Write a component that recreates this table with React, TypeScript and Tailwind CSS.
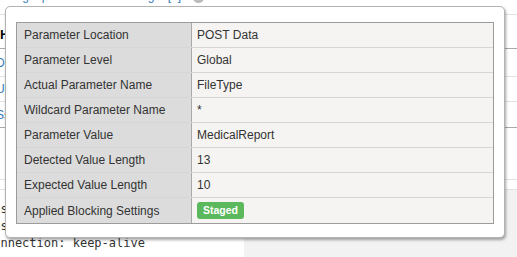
const details: [string, string][] = [
  ["Parameter Location", "POST Data"],
  ["Parameter Level", "Global"],
  ["Actual Parameter Name", "FileType"],
  ["Wildcard Parameter Name", "*"],
  ["Parameter Value", "MedicalReport"],
  ["Detected Value Length", "13"],
  ["Expected Value Length", "10"],
];

const requestLines = ["Host: 10.1.20.11", "Postman-Token: 3d1a", "Connection: keep-alive"];

function ViolationRow({ label, children, last }: { label: string; children: React.ReactNode; last?: boolean }) {
  return (
    <div className={`flex h-[25px] ${last ? "" : "border-b border-[#d6d6d6]"}`}>
      <div className="w-[175px] shrink-0 border-r border-[#a9a9a9] bg-[#dcdcdc] pl-[7px] flex items-center">
        {label}
      </div>
      <div className="flex-1 bg-[#f5f4f2] pl-[5px] flex items-center">{children}</div>
    </div>
  );
}

export default function App() {
  return (
    <div
      className="relative w-[517px] h-[257px] overflow-hidden bg-white text-[12px] text-[#333]"
      style={{ fontFamily: '"Liberation Sans", Arial, sans-serif' }}
    >
      {/* page behind the popup */}
      <div className="flex flex-col">
        <div className="h-[15px] flex items-start gap-[12px] pl-[7px] border-b border-[#e2e2e2]">
          <a className="text-[12px] leading-[14px] -mt-[11px] text-[#337ab7]">Illegal parameter value length [1]</a>
          <span className="w-[11px] h-[11px] rounded-full bg-[#bbb] -mt-[8px]" />
        </div>
        <div className="h-[34px] flex items-end pb-[4px] border-b border-[#aaa] font-bold text-[13px] text-black">
          <span>HTTP Request</span>
        </div>
        <div className="h-[28px] flex items-center border-b border-[#e2e2e2] text-[#337ab7] -ml-[4px]">
          <span>Do</span>
        </div>
        <div className="h-[25px] flex items-center border-b border-[#e2e2e2] text-[#337ab7] -ml-[4px]">
          <span>Uu</span>
        </div>
        <div className="h-[26px] flex items-center border-b border-[#aaa] text-[#337ab7] -ml-[4px]">
          <span>Ss</span>
        </div>
        <div className="h-[52px] border-b border-[#e2e2e2]" />
        <div className="h-[10px] border-b border-[#e2e2e2]" />
        <div className="flex h-[80px]">
          <pre
            className="w-[258px] bg-white pt-[11px] -ml-[14px] text-[12px] leading-[17px] text-[#333]"
            style={{ fontFamily: '"DejaVu Sans Mono", monospace' }}
          >
            {requestLines.join("\n")}
          </pre>
          <div className="flex-1 bg-[#f2f2f2]" />
        </div>
      </div>

      {/* violation details popup */}
      <div className="absolute left-[5px] top-[6px] w-[500px] h-[232px] bg-white border border-[#b3b3b3] rounded-[5px] shadow-[1px_2px_3px_rgba(0,0,0,0.35)] px-[10px] py-[15px]">
        <div className="border border-[#9c9c9c]">
          {details.map(([label, value]) => (
            <ViolationRow key={label} label={label}>
              {value}
            </ViolationRow>
          ))}
          <ViolationRow label="Applied Blocking Settings" last>
            <span className="h-[17px] px-[6px] rounded-[3px] bg-[#5cb85c] text-white font-bold text-[10.5px] flex items-center">
              Staged
            </span>
          </ViolationRow>
        </div>
      </div>
    </div>
  );
}
